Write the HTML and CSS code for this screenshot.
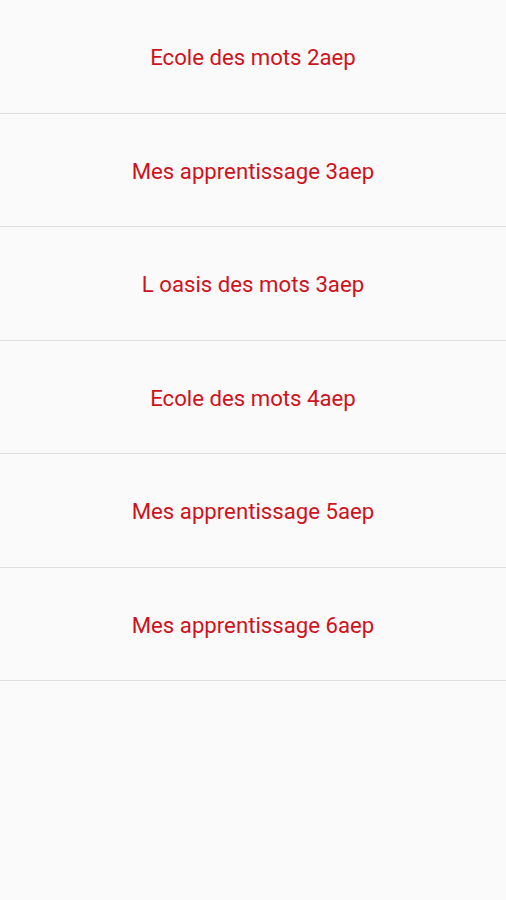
FILE: index.html
```html
<!DOCTYPE html>
<html>
<head>
<meta charset="utf-8">
<link rel="stylesheet" href="styles.css">
</head>
<body>
<ul class="list">
  <li class="item">Ecole des mots 2aep</li>
  <li class="item">Mes apprentissage 3aep</li>
  <li class="item">L oasis des mots 3aep</li>
  <li class="item">Ecole des mots 4aep</li>
  <li class="item">Mes apprentissage 5aep</li>
  <li class="item">Mes apprentissage 6aep</li>
</ul>
</body>
</html>
```
FILE: styles.css
```css
html, body {
  margin: 0;
  padding: 0;
  background: #fafafa;
  height: 100%;
}
body {
  font-family: Roboto, "Noto Sans", sans-serif;
}
.list {
  list-style: none;
  margin: 0;
  padding: 0;
}
.item {
  box-sizing: border-box;
  height: 113.5px;
  padding-top: 2px;
  border-bottom: 1.5px solid #e0e0e0;
  display: flex;
  align-items: center;
  justify-content: center;
  color: #d0121b;
  font-size: 22.2px;
}
```
